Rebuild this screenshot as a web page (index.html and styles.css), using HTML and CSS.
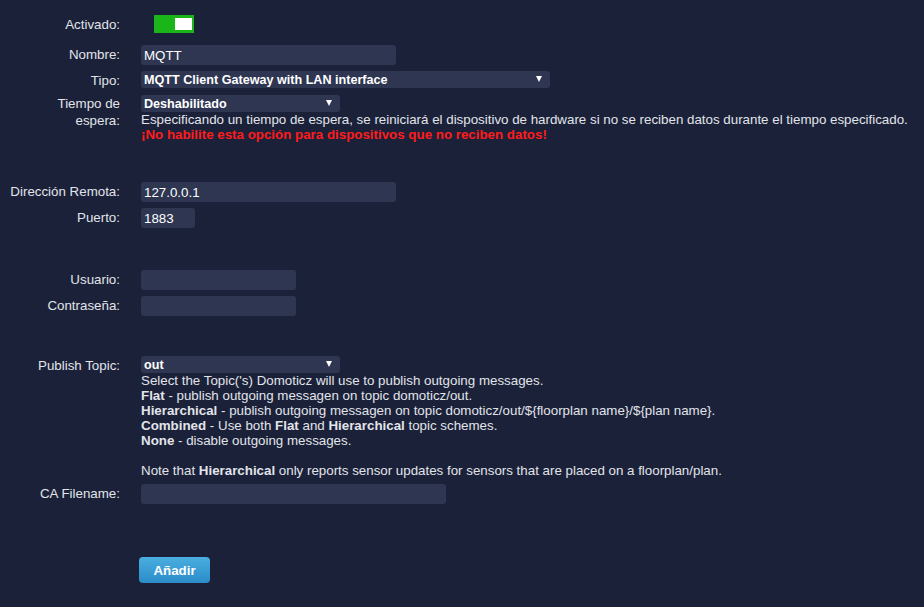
FILE: index.html
```html
<!DOCTYPE html>
<html lang="es">
<head>
    <meta charset="UTF-8">
    <title>Hardware - MQTT</title>
    <link rel="stylesheet" href="styles.css">
</head>
<body>
    <form class="hw-form">
        <!-- Activado -->
        <div class="row row-toggle">
            <label class="lbl">Activado:</label>
            <div class="val">
                <span class="toggle on"><span class="knob"></span></span>
            </div>
        </div>

        <div class="row">
            <label class="lbl">Nombre:</label>
            <div class="val"><input class="txt w-md" type="text" value="MQTT"></div>
        </div>

        <div class="row">
            <label class="lbl">Tipo:</label>
            <div class="val">
                <div class="sel w-lg">
                    <select><option>MQTT Client Gateway with LAN interface</option></select>
                </div>
            </div>
        </div>

        <div class="row">
            <label class="lbl lbl-wrap">Tiempo de espera:</label>
            <div class="val">
                <div class="sel w-sm">
                    <select><option>Deshabilitado</option></select>
                </div>
                <div class="help">
                    Especificando un tiempo de espera, se reiniciará el dispositivo de hardware si no se reciben datos durante el tiempo especificado.<br>
                    <span class="warn">¡No habilite esta opción para dispositivos que no reciben datos!</span>
                </div>
            </div>
        </div>

        <div class="row group">
            <label class="lbl">Dirección Remota:</label>
            <div class="val"><input class="txt w-md" type="text" value="127.0.0.1"></div>
        </div>

        <div class="row">
            <label class="lbl">Puerto:</label>
            <div class="val"><input class="txt w-xs" type="text" value="1883"></div>
        </div>

        <div class="row group group-auth">
            <label class="lbl">Usuario:</label>
            <div class="val"><input class="txt w-mid" type="text"></div>
        </div>

        <div class="row">
            <label class="lbl">Contraseña:</label>
            <div class="val"><input class="txt w-mid" type="password"></div>
        </div>

        <div class="row group">
            <label class="lbl">Publish Topic:</label>
            <div class="val">
                <div class="sel w-sm">
                    <select><option>out</option></select>
                </div>
                <div class="help">
                    Select the Topic('s) Domoticz will use to publish outgoing messages.<br>
                    <b>Flat</b> - publish outgoing messagen on topic domoticz/out.<br>
                    <b>Hierarchical</b> - publish outgoing messagen on topic domoticz/out/${floorplan name}/${plan name}.<br>
                    <b>Combined</b> - Use both <b>Flat</b> and <b>Hierarchical</b> topic schemes.<br>
                    <b>None</b> - disable outgoing messages.<br>
                    <br>
                    Note that <b>Hierarchical</b> only reports sensor updates for sensors that are placed on a floorplan/plan.
                </div>
            </div>
        </div>

        <div class="row">
            <label class="lbl">CA Filename:</label>
            <div class="val"><input class="txt w-ca" type="text"></div>
        </div>

        <div class="actions">
            <button type="button" class="btn">Añadir</button>
        </div>
    </form>
</body>
</html>
```

FILE: styles.css
```css
/* Page */
body {
    margin: 0;
    background: #1a2139;
    color: #e2e4ea;
    font-family: "Liberation Sans", Arial, sans-serif;
    font-size: 13.33px;
}

.hw-form {
    padding-top: 15px;
}

/* Form rows */
.row {
    display: grid;
    grid-template-columns: 120px 1fr;
    column-gap: 21px;
    margin-bottom: 6px;
}

.row-toggle {
    margin-bottom: 12px;
}

.row.group {
    margin-top: 40px;
}

.row.group-auth {
    margin-top: 42px;
}

.lbl {
    text-align: right;
    line-height: 17px;
    padding-top: 1px;
}

.lbl-wrap {
    width: 80px;
    justify-self: end;
    padding-top: 0;
}

.val {
    display: flex;
    flex-direction: column;
    align-items: flex-start;
}

/* Toggle switch */
.toggle {
    display: flex;
    justify-content: flex-end;
    align-items: center;
    width: 40px;
    height: 18px;
    margin-left: 13px;
    background: #19b519;
    box-sizing: border-box;
    padding-right: 2px;
}

.knob {
    width: 17px;
    height: 12px;
    background: #fff;
}

/* Inputs */
.txt {
    height: 20px;
    box-sizing: border-box;
    border: none;
    border-radius: 3px;
    background: #2e3652;
    color: #fff;
    font-family: inherit;
    font-size: 13.33px;
    padding: 0 3px;
    outline: none;
}

.w-md { width: 255px; }
.w-xs { width: 54px; }
.w-mid { width: 155px; }
.w-ca { width: 305px; }

/* Selects */
.sel {
    position: relative;
    height: 17px;
}

.sel select {
    appearance: none;
    -webkit-appearance: none;
    width: 100%;
    height: 17px;
    border: none;
    border-radius: 3px;
    background: #2e3652;
    color: #fff;
    font-family: inherit;
    font-size: 12.6px;
    font-weight: bold;
    padding: 0 3px;
    outline: none;
}

.sel::after {
    content: "";
    position: absolute;
    right: 8px;
    top: 5px;
    border-left: 3.5px solid transparent;
    border-right: 3.5px solid transparent;
    border-top: 6px solid #fff;
    pointer-events: none;
}

.w-lg { width: 409px; }
.w-sm { width: 199px; }

/* Help text */
.help {
    line-height: 15px;
}

.warn {
    color: #ff1c1c;
    font-weight: bold;
}

/* Button */
.actions {
    padding: 47px 0 0 139px;
}

.btn {
    width: 71px;
    height: 26px;
    border: none;
    border-radius: 4px;
    background: linear-gradient(#4aaee0, #2b8cc9);
    color: #fff;
    font-family: inherit;
    font-size: 13.33px;
    font-weight: bold;
    cursor: pointer;
}
```
